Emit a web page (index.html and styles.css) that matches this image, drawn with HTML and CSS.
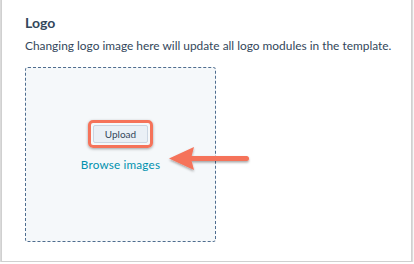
FILE: index.html
```html
<!DOCTYPE html>
<html lang="en">
<head>
    <meta charset="UTF-8">
    <title>Logo</title>
    <link rel="stylesheet" href="styles.css">
</head>
<body>
    <div class="card">
        <h2 class="title">Logo</h2>
        <p class="desc">Changing logo image here will update all logo modules in the template.</p>

        <div class="dropzone">
            <div class="highlight">
                <button type="button" class="upload">Upload</button>
            </div>
            <a class="browse" href="#">Browse images</a>
        </div>

        <svg class="arrow" width="90" height="30" viewBox="0 0 90 30">
            <defs>
                <filter id="sh" x="-20%" y="-40%" width="140%" height="180%">
                    <feDropShadow dx="0" dy="1.5" stdDeviation="1.2" flood-color="#000" flood-opacity="0.35"/>
                </filter>
            </defs>
            <g filter="url(#sh)" fill="#f5735a">
                <rect x="20" y="10" width="62" height="5" rx="2.5"/>
                <path d="M2 12.5 L27 1 L24 12.5 L27 24 Z"/>
            </g>
        </svg>
    </div>
</body>
</html>
```

FILE: styles.css
```css
body {
    margin: 0;
    background: #fff;
    font-family: Lato, "Open Sans", sans-serif;
    color: #33475b;
}
.card {
    position: relative;
    height: 266px;
    margin: -4px 2px 0 1px;
    padding: 4px 10px 0 23px;
    border: 1px solid #d0d0d0;
    border-top: none;
    box-shadow: 0 1px 2px rgba(0, 0, 0, 0.45);
    box-sizing: border-box;
    background: #fff;
}
.title {
    margin: 14px 0 0;
    font-size: 14px;
    font-weight: 700;
    line-height: 18px;
}
.desc {
    margin: 5px 0 0;
    font-size: 11.9px;
    line-height: 18px;
    white-space: nowrap;
}
.dropzone {
    width: 191px;
    height: 175px;
    margin-top: 12px;
    box-sizing: border-box;
    border: 1px dashed #4f6d8f;
    border-radius: 3px;
    background: #f5f8fa;
    display: flex;
    flex-direction: column;
    align-items: center;
    padding-top: 52px;
}
.highlight {
    border: 3px solid #f5735a;
    border-radius: 5px;
    padding: 2px;
    box-shadow: 0 1px 3px rgba(0, 0, 0, 0.35);
    display: flex;
}
.upload {
    font-family: inherit;
    font-size: 10px;
    color: #33475b;
    background: #eaf0f6;
    border: 1px solid #cbd6e2;
    border-radius: 2px;
    width: 55px;
    height: 18px;
    padding: 0;
    cursor: pointer;
}
.browse {
    margin-top: 9px;
    font-size: 11.7px;
    color: #0091ae;
    text-decoration: none;
    letter-spacing: 0.2px;
}
.arrow {
    position: absolute;
    left: 165px;
    top: 150px;
}
```
